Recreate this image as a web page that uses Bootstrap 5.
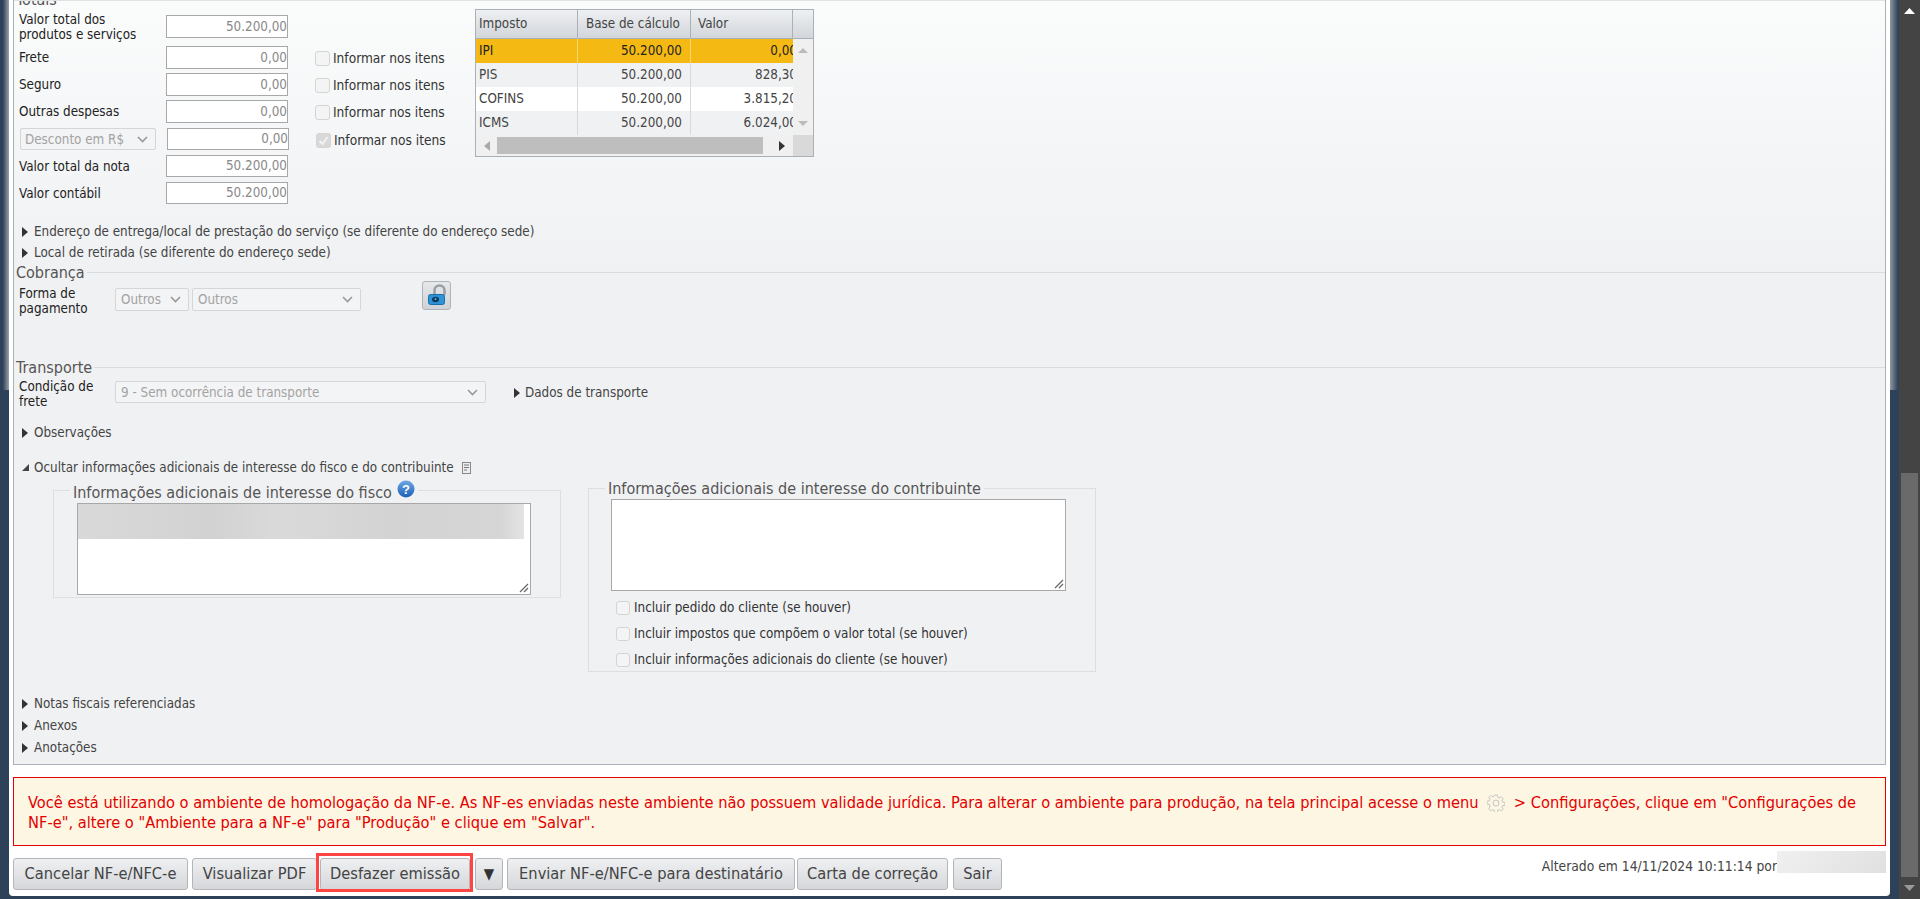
<!DOCTYPE html>
<html lang="pt-BR">
<head>
<meta charset="utf-8">
<title>NF-e</title>
<link rel="stylesheet" href="https://cdn.jsdelivr.net/npm/bootstrap@5.3.0/dist/css/bootstrap.min.css">
<style>
html,body{height:899px;overflow:hidden}
body{background:#2d4159;font-family:"DejaVu Sans Condensed","DejaVu Sans",sans-serif;font-size:13.33px;color:#333;line-height:15px}
.shell{height:899px}
.edge-l{width:9px;flex:none;background:linear-gradient(90deg,#2d4159 30%,#9aa1a9 100%) no-repeat;background-size:100% 390px}
.edge-r{width:9px;flex:none;background:linear-gradient(270deg,#2d4159 10%,#8f979f 100%) no-repeat;background-size:100% 390px}
.sheet{width:1881px;flex:none;background:#fff;padding:0 4px;height:896px;border-bottom-right-radius:4px;border-bottom-left-radius:4px}
.sbar{width:21px;flex:none;background:#444}
.panel{height:765px;border:1px solid #a9b0b8;border-top:0;background:linear-gradient(180deg,#fafbfb 0,#f0f1f3 270px);overflow:hidden}
.lbl{color:#222}
.totais{height:216px}
.tot-head{height:1px;background:#e0e2e4}
.tot-legend{font-size:16px;color:#555;line-height:16px;height:7px;overflow:hidden;padding-left:2px}
.tot-legend span{display:block;margin-top:-9px}
.tot-left{width:461px;padding-left:5px;padding-top:3px}
.trow{display:flex;align-items:center;height:27px}
.trow-first{height:33px;align-items:flex-start}
.trow-first .lbl{margin-top:1px}
.trow-first .numbox{margin-top:4px}
.trow-tall{height:28px}
.trow .lbl{width:147px;flex:none}
.numbox{width:122px;height:23px;border:1px solid #a8a8a8;background:#fff;color:#888;text-align:right;line-height:21px;flex:none}
.numbox-s{height:22px;line-height:20px;margin-bottom:1px}
.chk{width:15px;height:15px;border:1px solid #d4d4d4;border-radius:3px;background:#f4f4f4;flex:none;display:inline-block}
.chk-on{background:#d8d8d8}
.itm{margin:2px 0 0 27px;display:flex;align-items:center;gap:3px;color:#333;white-space:nowrap;font-size:13.6px}
.sel{height:23px;border:1px solid #d6d6d6;border-radius:2px;background:#f3f4f5;color:#a3a3a3;padding:0 7px 0 5px;display:flex;align-items:center;justify-content:space-between;flex:none;white-space:nowrap}
.sel-disc{width:136px;height:22px;margin-right:11px;margin-left:1px;padding-left:4px}
.sel-a{width:74px;margin:7px 3px 0 0}
.sel-b{width:169px;margin-top:7px}
.sel-c{width:371px;height:22px;margin-top:5px}
.gridx{width:339px;height:148px;border:1px solid #a9b0b8;margin-top:1px;background:#f0f1f3;flex:none}
.gh{height:29px;display:flex;background:linear-gradient(180deg,#eef0f2,#d2d5da);border-bottom:1px solid #a9b0b8;color:#444;line-height:28px}
.gh div{border-right:1px solid #a9b0b8;padding-left:3px;flex:none}
.gh .c2{padding-left:8px}
.gh .c3{padding-left:7px}
.c1{width:102px}.c2{width:113px}.c3{width:102px}
.gbody{display:flex;height:96px}
.grows{width:317px;overflow:hidden;flex:none}
.gr{display:flex;height:24px;line-height:24px;color:#444;background:#f0f1f3}
.gr div{flex:none;border-right:1px solid #d6d8dc;white-space:nowrap;overflow:hidden}
.gr .c1{padding-left:3px}
.gr .c2{text-align:right;padding-right:8px}
.gr .c3{text-align:right;border:0}
.gr .c3 span{display:inline-block;margin-right:-4px}
.gr-sel{background:#f5b914;color:#222}
.gr-sel div{border-right-color:#f8d873}
.gr-w{background:#fff}
.vscr{width:20px;background:#f0f0f0;display:flex;flex-direction:column;justify-content:space-between;align-items:center;padding:9px 0}
.hscr{display:flex;height:21px}
.htrack{width:317px;background:#f0f0f0;display:flex;align-items:center;padding-left:8px}
.hthumb{width:266px;height:17px;background:#bebebe;margin:0 16px 0 7px}
.hcorner{width:20px;background:#d9d9d9}
.hsect{display:flex;align-items:center;gap:6px;color:#444;white-space:nowrap;height:15px}
.hgroup{margin-left:8px;gap:6px}
.hdados{margin:9px 0 0 28px;gap:5px}
.hobs{margin-left:8px}
.hocultar{margin:20px 0 0 8px}
.docico{margin-left:2px;flex:none}
.tri-r{width:0;height:0;border-left:6px solid #333;border-top:5px solid transparent;border-bottom:5px solid transparent;flex:none}
.tri-d{width:0;height:0;border-right:7px solid #444;border-top:7px solid transparent;flex:none;margin-right:-1px}
.sec-t{display:flex;align-items:center;height:16px;font-size:16px;color:#555;line-height:16px}
.sec-t span{padding:0 2px;flex:none}
.sec-t i{flex:1;height:1px;background:#d9dbdd;display:block;margin-bottom:2px}
.sec-cob{margin-top:5px}
.area-cob{height:79px;padding-left:5px}
.area-tra{height:49px;padding-left:5px}
.lblcol{width:96px;flex:none}
.lbl-c{padding-top:5px}
.lbl-t{padding-top:3px}
.lockbtn{margin-left:61px;width:29px;height:29px;border:1px solid #aeb3b8;border-radius:3px;background:linear-gradient(180deg,#e6e8ea,#cfd2d6);flex:none}
.fsrow{margin:13px 0 0 39px}
.fsbox{border:1px solid #dcdee0;position:relative;flex:none;width:508px}
.fs-a{height:108px;margin-top:2px;padding:12px 0 0 23px}
.fs-b{height:184px;margin-left:27px;padding:10px 0 0 22px}
.fsleg{position:absolute;left:16px;background:#f0f1f3;font-size:16px;color:#555;line-height:16px;padding:0 3px;white-space:nowrap;display:flex;align-items:flex-start}
.fs-a .fsleg{top:-6px}
.fs-b .fsleg{top:-8px}
.qico{margin:-5px 0 0 5px;flex:none}
.txarea{background:#fff;border:1px solid #a8a8a8;position:relative;height:92px}
.fs-a .txarea{width:454px}
.fs-b .txarea{width:455px}
.grip{position:absolute;right:1px;bottom:1px}
.blur{height:35px;margin-right:6px;background:linear-gradient(90deg,#d9d9d9,#d2d2d2 30%,#dadada 45%,#d3d3d3 70%,#d6d6d6 95%,#e4e4e4)}
.chklist{margin:9px 0 0 5px;gap:11px}
.chklist .chk{width:14px;height:14px}
.chkline{display:flex;align-items:center;gap:4px;color:#333;height:15px;white-space:nowrap}
.lastgroup{margin:24px 0 0 8px;gap:7px}
.warn{margin-top:12px;height:69px;border:1px solid #e30000;background:#fdf6e3;color:#e30000;font-size:16.3px;line-height:20px;padding:15px 25px 0 14px}
.warn svg{vertical-align:-4px;margin:0 4px}
.btnbar{display:flex;align-items:flex-start;margin-top:12px;position:relative}
.gbtn{height:32px;border:1px solid #b3b5b8;border-radius:3px;background:linear-gradient(180deg,#eef0f2,#d5d7da);color:#444;font-size:16.3px;line-height:30px;padding:0;text-align:center;white-space:nowrap;flex:none}
.b1{width:175px;margin-right:4px}
.b2{width:125px;margin-right:3px}
.b3{width:150px;margin-right:5px}
.b4{width:28px;margin-right:4px;font-size:15px;color:#333}
.b5{width:288px;margin-right:2px}
.b6{width:151px;margin-right:5px}
.b7{width:49px}
.hilite{border:3px solid #f44;position:absolute;left:303px;top:-5px;width:157px;height:39px}
.stamp{margin-left:auto;display:flex;align-items:flex-start;color:#444;white-space:nowrap;margin-top:-7px;font-size:13.75px}
.stamp span{line-height:15px;margin-top:8px}
.stamp b{display:block;width:109px;height:22px;background:linear-gradient(135deg,#f0f0f0,#e0e0e0)}
.sb-up,.sb-dn{height:22px;display:flex;align-items:center;justify-content:center}
.sb-track{height:404px;margin-top:451px}
.sb-thumb{width:17px;height:100%;background:#6a6a6a;margin:0 auto}
</style>
</head>
<body>
<div class="shell d-flex">
  <div class="edge-l"></div>
  <div class="sheet">
    <div class="panel">
      <div class="tot-head"></div>
      <div class="tot-legend"><span>Totais</span></div>
      <div class="totais d-flex">
        <div class="tot-left">
          <div class="trow trow-first"><div class="lbl">Valor total dos<br>produtos e serviços</div><div class="numbox">50.200,00</div></div>
          <div class="trow"><div class="lbl">Frete</div><div class="numbox">0,00</div><div class="itm"><i class="chk"></i>Informar nos itens</div></div>
          <div class="trow"><div class="lbl">Seguro</div><div class="numbox">0,00</div><div class="itm"><i class="chk"></i>Informar nos itens</div></div>
          <div class="trow"><div class="lbl">Outras despesas</div><div class="numbox">0,00</div><div class="itm"><i class="chk"></i>Informar nos itens</div></div>
          <div class="trow trow-tall"><div class="sel sel-disc"><span>Desconto em R$</span><svg width="11" height="7" viewBox="0 0 11 7"><path d="M1 1l4.500 4.500L10 1" fill="none" stroke="#999" stroke-width="1.600"/></svg></div><div class="numbox numbox-s">0,00</div><div class="itm"><i class="chk chk-on"><svg width="13" height="13" viewBox="0 0 13 13" class="d-block"><path d="M2.500 7l3 3 5-7" fill="none" stroke="#f2f2f2" stroke-width="2"/></svg></i>Informar nos itens</div></div>
          <div class="trow"><div class="lbl">Valor total da nota</div><div class="numbox numbox-s">50.200,00</div></div>
          <div class="trow"><div class="lbl">Valor contábil</div><div class="numbox numbox-s">50.200,00</div></div>
        </div>
        <div class="gridx">
          <div class="gh"><div class="c1">Imposto</div><div class="c2">Base de cálculo</div><div class="c3">Valor</div></div>
          <div class="gbody">
            <div class="grows">
              <div class="gr gr-sel"><div class="c1">IPI</div><div class="c2">50.200,00</div><div class="c3"><span>0,00</span></div></div>
              <div class="gr"><div class="c1">PIS</div><div class="c2">50.200,00</div><div class="c3"><span>828,30</span></div></div>
              <div class="gr gr-w"><div class="c1">COFINS</div><div class="c2">50.200,00</div><div class="c3"><span>3.815,20</span></div></div>
              <div class="gr"><div class="c1">ICMS</div><div class="c2">50.200,00</div><div class="c3"><span>6.024,00</span></div></div>
            </div>
            <div class="vscr"><svg width="10" height="5"><path d="M0 5L5 0l5 5z" fill="#bbb"/></svg><svg width="10" height="5"><path d="M0 0l5 5 5-5z" fill="#bbb"/></svg></div>
          </div>
          <div class="hscr"><div class="htrack"><svg width="6" height="10"><path d="M6 0L0 5l6 5z" fill="#aaa"/></svg><div class="hthumb"></div><svg width="6" height="10"><path d="M0 0l6 5-6 5z" fill="#333"/></svg></div><div class="hcorner"></div></div>
        </div>
      </div>
      <div class="d-flex flex-column hgroup"><div class="hsect"><i class="tri-r"></i>Endereço de entrega/local de prestação do serviço (se diferente do endereço sede)</div><div class="hsect"><i class="tri-r"></i>Local de retirada (se diferente do endereço sede)</div></div>
      <div class="sec-t sec-cob"><span>Cobrança</span><i></i></div>
      <div class="d-flex area-cob">
        <div class="lbl lblcol lbl-c">Forma de<br>pagamento</div>
        <div class="sel sel-a"><span>Outros</span><svg width="11" height="7" viewBox="0 0 11 7"><path d="M1 1l4.500 4.500L10 1" fill="none" stroke="#999" stroke-width="1.600"/></svg></div>
        <div class="sel sel-b"><span>Outros</span><svg width="11" height="7" viewBox="0 0 11 7"><path d="M1 1l4.500 4.500L10 1" fill="none" stroke="#999" stroke-width="1.600"/></svg></div>
        <div class="lockbtn">
          <svg class="d-block" width="27" height="27" viewBox="0 0 27 27"><path d="M11.500 13V8.500a5 5 0 0 1 10 0V13" fill="none" stroke="#9a9ea3" stroke-width="2.500"/><rect x="5.500" y="12.500" width="16" height="10" rx="2" fill="#2f92d4" stroke="#1c6ea8"/><ellipse cx="12.500" cy="17.500" rx="3.500" ry="2.800" fill="#0d3a5c"/><circle cx="12.500" cy="17" r="1" fill="#5fb6e6"/></svg>
        </div>
      </div>
      <div class="sec-t"><span>Transporte</span><i></i></div>
      <div class="d-flex align-items-start area-tra">
        <div class="lbl lblcol lbl-t">Condição de<br>frete</div>
        <div class="sel sel-c"><span>9 - Sem ocorrência de transporte</span><svg width="11" height="7" viewBox="0 0 11 7"><path d="M1 1l4.500 4.500L10 1" fill="none" stroke="#999" stroke-width="1.600"/></svg></div>
        <div class="hsect hdados"><i class="tri-r"></i>Dados de transporte</div>
      </div>
      <div class="hsect hobs"><i class="tri-r"></i>Observações</div>
      <div class="hsect hocultar"><i class="tri-d"></i>Ocultar informações adicionais de interesse do fisco e do contribuinte<svg class="docico" width="9" height="12" viewBox="0 0 9 12"><rect x=".5" y=".5" width="8" height="11" fill="#eee" stroke="#888"/><path d="M2 3h5M2 5.500h5M2 8h3" stroke="#777"/></svg></div>
      <div class="d-flex align-items-start fsrow">
        <div class="fsbox fs-a">
          <div class="fsleg">Informações adicionais de interesse do fisco<svg class="qico" width="18" height="18" viewBox="0 0 18 18"><defs><linearGradient id="qg" x1="0" y1="0" x2="0" y2="1"><stop offset="0" stop-color="#6fa8e6"/><stop offset="1" stop-color="#1c5fb8"/></linearGradient></defs><circle cx="9" cy="9" r="8.500" fill="url(#qg)"/><text x="9" y="13.500" text-anchor="middle" font-family="Liberation Sans,sans-serif" font-size="13" font-weight="700" fill="#fff">?</text></svg></div>
          <div class="txarea"><div class="blur"></div><svg class="grip" width="10" height="10" viewBox="0 0 10 10"><path d="M1 9l8-8M5 9l4-4" stroke="#666" stroke-width="1.200"/></svg></div>
        </div>
        <div class="fsbox fs-b">
          <div class="fsleg">Informações adicionais de interesse do contribuinte</div>
          <div class="txarea"><svg class="grip" width="10" height="10" viewBox="0 0 10 10"><path d="M1 9l8-8M5 9l4-4" stroke="#666" stroke-width="1.200"/></svg></div>
          <div class="d-flex flex-column chklist">
            <div class="chkline"><i class="chk"></i>Incluir pedido do cliente (se houver)</div>
            <div class="chkline"><i class="chk"></i>Incluir impostos que compõem o valor total (se houver)</div>
            <div class="chkline"><i class="chk"></i>Incluir informações adicionais do cliente (se houver)</div>
          </div>
        </div>
      </div>
      <div class="d-flex flex-column lastgroup">
        <div class="hsect"><i class="tri-r"></i>Notas fiscais referenciadas</div>
        <div class="hsect"><i class="tri-r"></i>Anexos</div>
        <div class="hsect"><i class="tri-r"></i>Anotações</div>
      </div>
    </div>
    <div class="warn">Você está utilizando o ambiente de homologação da NF-e. As NF-es enviadas neste ambiente não possuem validade jurídica. Para alterar o ambiente para produção, na tela principal acesse o menu <svg width="18" height="18" viewBox="0 0 18 18"><g fill="none" stroke="#c4c4c4"><circle cx="9" cy="9" r="3"/><path d="M7.600 1h2.800l.4 2.300 1.500.7 2-1.300 1.900 2-1.300 1.900.6 1.400 2.500.5v2.800l-2.500.4-.6 1.500 1.300 1.900-1.900 1.900-2-1.300-1.500.7-.4 2.400H7.600l-.4-2.400-1.500-.7-2 1.300-1.900-1.900L3.100 12l-.6-1.500L0 10.100V7.300l2.500-.5.600-1.400-1.300-1.900 1.900-2 2 1.300 1.500-.7z"/></g></svg> &gt; Configurações, clique em "Configurações de NF-e", altere o "Ambiente para a NF-e" para "Produção" e clique em "Salvar".</div>
    <div class="btnbar">
      <div class="gbtn b1">Cancelar NF-e/NFC-e</div>
      <div class="gbtn b2">Visualizar PDF</div>
      <div class="gbtn b3">Desfazer emissão</div>
      <div class="gbtn b4">▼</div>
      <div class="gbtn b5">Enviar NF-e/NFC-e para destinatário</div>
      <div class="gbtn b6">Carta de correção</div>
      <div class="gbtn b7">Sair</div>
      <div class="hilite"></div>
      <div class="stamp"><span>Alterado em 14/11/2024 10:11:14 por</span><b></b></div>
    </div>
  </div>
  <div class="edge-r"></div>
  <div class="sbar">
    <div class="sb-up"><svg width="11" height="6"><path d="M0 6L5.500 0 11 6z" fill="#fff"/></svg></div>
    <div class="sb-track"><div class="sb-thumb"></div></div>
    <div class="sb-dn"><svg width="11" height="6"><path d="M0 0L5.500 6 11 0z" fill="#999"/></svg></div>
  </div>
</div>
</body>
</html>
